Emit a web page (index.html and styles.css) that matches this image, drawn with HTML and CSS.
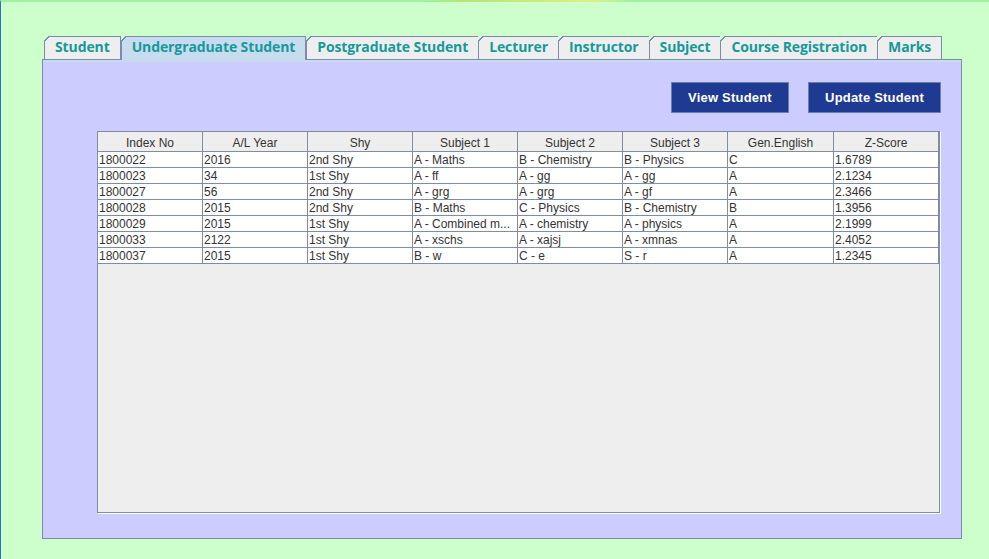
FILE: index.html
```html
<!DOCTYPE html>
<html>
<head>
<meta charset="utf-8">
<link rel="stylesheet" href="styles.css">
</head>
<body>
<div class="app">
  <div class="tabs">
    <div class="tab">Student</div>
    <div class="tab active">Undergraduate Student</div>
    <div class="tab">Postgraduate Student</div>
    <div class="tab">Lecturer</div>
    <div class="tab">Instructor</div>
    <div class="tab">Subject</div>
    <div class="tab">Course Registration</div>
    <div class="tab">Marks</div>
  </div>
  <div class="panel">
    <div class="actions">
      <button class="btn">View Student</button>
      <button class="btn">Update Student</button>
    </div>
    <div class="scroll">
      <div class="row head">
        <div class="cell">Index No</div>
        <div class="cell">A/L Year</div>
        <div class="cell">Shy</div>
        <div class="cell">Subject 1</div>
        <div class="cell">Subject 2</div>
        <div class="cell">Subject 3</div>
        <div class="cell">Gen.English</div>
        <div class="cell">Z-Score</div>
      </div>
      <div class="row">
        <div class="cell">1800022</div><div class="cell">2016</div><div class="cell">2nd Shy</div><div class="cell">A - Maths</div><div class="cell">B - Chemistry</div><div class="cell">B - Physics</div><div class="cell">C</div><div class="cell">1.6789</div>
      </div>
      <div class="row">
        <div class="cell">1800023</div><div class="cell">34</div><div class="cell">1st Shy</div><div class="cell">A - ff</div><div class="cell">A - gg</div><div class="cell">A - gg</div><div class="cell">A</div><div class="cell">2.1234</div>
      </div>
      <div class="row">
        <div class="cell">1800027</div><div class="cell">56</div><div class="cell">2nd Shy</div><div class="cell">A - grg</div><div class="cell">A - grg</div><div class="cell">A - gf</div><div class="cell">A</div><div class="cell">2.3466</div>
      </div>
      <div class="row">
        <div class="cell">1800028</div><div class="cell">2015</div><div class="cell">2nd Shy</div><div class="cell">B - Maths</div><div class="cell">C - Physics</div><div class="cell">B - Chemistry</div><div class="cell">B</div><div class="cell">1.3956</div>
      </div>
      <div class="row">
        <div class="cell">1800029</div><div class="cell">2015</div><div class="cell">1st Shy</div><div class="cell">A - Combined m...</div><div class="cell">A - chemistry</div><div class="cell">A - physics</div><div class="cell">A</div><div class="cell">2.1999</div>
      </div>
      <div class="row">
        <div class="cell">1800033</div><div class="cell">2122</div><div class="cell">1st Shy</div><div class="cell">A - xschs</div><div class="cell">A - xajsj</div><div class="cell">A - xmnas</div><div class="cell">A</div><div class="cell">2.4052</div>
      </div>
      <div class="row">
        <div class="cell">1800037</div><div class="cell">2015</div><div class="cell">1st Shy</div><div class="cell">B - w</div><div class="cell">C - e</div><div class="cell">S - r</div><div class="cell">A</div><div class="cell">1.2345</div>
      </div>
    </div>
  </div>
</div>
</body>
</html>
```
FILE: styles.css
```css
* { box-sizing: border-box; }
html, body { margin: 0; padding: 0; }
body {
  background: #ccffcc;
  width: 989px;
  height: 559px;
  overflow: hidden;
}
.app {
  height: 559px;
  border-left: 1px solid #2f70b4;
  border-top: 2px solid #9cf49c;
  background: #ccffcc;
  padding: 34px 0 0 41px;
  position: relative;
}
.app::before {
  content: "";
  position: absolute;
  left: 0; right: 0; top: -2px; height: 2px;
  background: linear-gradient(90deg, #9cf49c 0, #9cf49c 43%, #b8e47a 47%, #cfec74 55%, #dcf08a 60%, #9cf49c 64%, #9cf49c 100%);
}
.tabs {
  display: flex;
  margin-left: 2px;
  height: 23px;
  position: relative;
  z-index: 1;
}
.tab {
  position: relative;
  height: 23px;
  padding: 0 10px;
  border: 1px solid #7c8bab;
  border-bottom: none;
  background: #eeeeee;
  color: #16999a;
  font-family: "Open Sans", sans-serif;
  font-weight: 700;
  font-size: 14px;
  letter-spacing: -0.11px;
  line-height: 20px;
  white-space: nowrap;
  margin-left: -1px;
}
.tab:first-child { margin-left: 0; }
.tab::before {
  content: "";
  position: absolute;
  left: -1px; top: -1px;
  width: 5px; height: 5px;
  background: linear-gradient(135deg, #ccffcc 0, #ccffcc 42%, #7c8bab 42%, #7c8bab 62%, transparent 62%);
}
.tab.active {
  background: #c8dcf0;
  height: 24px;
  margin-left: 0;
}
.tab.active + .tab { margin-left: 0; }
.panel {
  width: 920px;
  height: 480px;
  border: 1px solid #7c8bab;
  background: #ccccff;
  box-shadow: inset 0 2px 0 #c8dcf0;
  padding: 22px 20px 0 54px;
  display: flex;
  flex-direction: column;
}
.actions {
  display: flex;
  justify-content: flex-end;
  gap: 19px;
}
.btn {
  height: 31px;
  padding: 0 16px;
  background: #1f3a93;
  border: 1px solid #6d7fa0;
  color: #ffffff;
  font-family: "Liberation Sans", Arial, sans-serif;
  font-weight: 700;
  font-size: 13px;
  letter-spacing: 0.2px;
  margin: 0;
}
.btn:first-child { width: 118px; }
.btn:last-child { width: 133px; }
.scroll {
  margin-top: 18px;
  width: 843px;
  height: 382px;
  border: 1px solid #7f8ca3;
  box-shadow: 1px 1px 0 #ffffff;
  background: #eeeeee;
}
.row {
  display: grid;
  grid-template-columns: 105px 105px 105px 105px 105px 105px 106px 105px;
  height: 16px;
  font-family: "Liberation Sans", Arial, sans-serif;
  font-size: 12px;
  color: #333333;
}
.row.head { height: 20px; }
.cell {
  border-right: 1px solid #7f8ca3;
  border-bottom: 1px solid #7f8ca3;
  background: #ffffff;
  padding-left: 1px;
  line-height: 17px;
  white-space: nowrap;
  overflow: hidden;
}
.head .cell {
  background: #eeeeee;
  text-align: center;
  line-height: 22px;
  padding: 0;
}
```
